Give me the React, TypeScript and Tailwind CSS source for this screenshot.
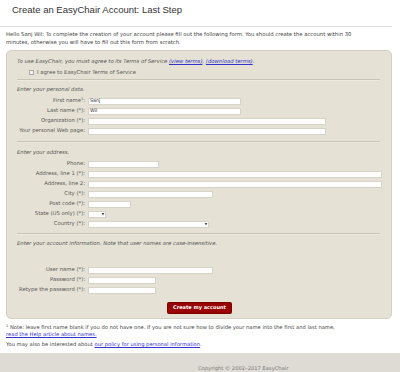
import React from 'react'

const font = { fontFamily: '"DejaVu Sans", Verdana, sans-serif' }

type Field = { label: React.ReactNode; w: string; value?: string; select?: boolean }

const personal: Field[] = [
  { label: <>First name<sup className="text-[3.5px]">1</sup>:</>, w: 'w-[153px]', value: 'Sanj' },
  { label: 'Last name (*):', w: 'w-[153px]', value: 'Wil' },
  { label: 'Organization (*):', w: 'w-[238px]' },
  { label: 'Your personal Web page:', w: 'w-[238px]' },
]

const address: Field[] = [
  { label: 'Phone:', w: 'w-[71px]' },
  { label: 'Address, line 1 (*):', w: 'w-[294px]' },
  { label: 'Address, line 2:', w: 'w-[294px]' },
  { label: 'City (*):', w: 'w-[125px]' },
  { label: 'Post code (*):', w: 'w-[43px]' },
  { label: 'State (US only) (*):', w: 'w-[18px]', select: true },
  { label: 'Country (*):', w: 'w-[121px]', select: true },
]

const account: Field[] = [
  { label: 'User name (*):', w: 'w-[125px]' },
  { label: 'Password (*):', w: 'w-[68px]' },
  { label: 'Retype the password (*):', w: 'w-[68px]' },
]

function Row({ f }: { f: Field }) {
  return (
    <div className="flex h-[10px] items-center">
      <div className="w-[71px] shrink-0 whitespace-nowrap pr-[3px] text-right text-[5.3px] text-[#555]">{f.label}</div>
      <div
        className={`${f.w} flex h-[7px] items-center justify-between border border-[#d6d3c8] bg-white px-[1px] text-[4.8px] text-[#333]`}
      >
        <span>{f.value}</span>
        {f.select && <span className="text-[3px] leading-none">▼</span>}
      </div>
    </div>
  )
}

function Sep() {
  return <div className="mr-[3px] h-[2px] border-t border-[#c8c4b6] bg-[#eceadf]" />
}

function Hint({ children }: { children: React.ReactNode }) {
  return <div className="flex h-[10px] items-center whitespace-nowrap text-[5.3px] italic text-[#555]">{children}</div>
}

export default function App() {
  return (
    <div className="relative h-[372px] w-[400px] overflow-hidden bg-white" style={font}>
      <div className="flex h-[20px] items-center pl-[12px] text-[9.5px] text-[#333]" style={{ fontFamily: '"Liberation Sans", Arial, sans-serif' }}>
        Create an EasyChair Account: Last Step
      </div>
      <div className="mt-[6px] mr-[8px] h-px bg-[#dcdcdc]" />
      <div className="w-[358px] px-[6px] pt-[3px] text-[5.3px] leading-[8px] text-[#444]">
        Hello Sanj Wil: To complete the creation of your account please fill out the following form. You should create the account within 30 minutes, otherwise you will have to fill out this form from scratch.
      </div>

      <div className="mx-[6px] mt-[4px] w-[386px] rounded-[5px] border border-[#d3cfc2] bg-[#e5e2d5] pl-[10px] pr-[8px] pt-[6px] pb-[5px]">
        <Hint>
          To use EasyChair, you must agree to its Terms of Service&nbsp;
          <span className="text-[#3333cc] underline">(view terms)</span>,&nbsp;
          <span className="text-[#3333cc] underline">(download terms)</span>.
        </Hint>
        <div className="flex h-[11px] items-center pl-[12px] text-[5.3px] text-[#555]">
          <span className="mr-[3px] inline-block h-[5px] w-[5px] border border-[#aaa] bg-[#f4f4f4]" />
          I agree to EasyChair Terms of Service
        </div>
        <div className="mt-[1px]"><Sep /></div>
        <div className="mt-[4px]"><Hint>Enter your personal data.</Hint></div>
        <div className="mt-[1px]">
          {personal.map((f, i) => <Row key={i} f={f} />)}
        </div>
        <div className="mt-[5px]"><Sep /></div>
        <div className="mt-[5px]"><Hint>Enter your address.</Hint></div>
        <div className="mt-[1px]">
          {address.map((f, i) => <Row key={i} f={f} />)}
        </div>
        <div className="mt-[4px]"><Sep /></div>
        <div className="mt-[4px]">
          <Hint>Enter your account information. Note that user names are case-insensitive.</Hint>
        </div>
        <div className="mt-[16px]">
          {account.map((f, i) => <Row key={i} f={f} />)}
        </div>
        <div className="mt-[8px] pl-[151px]">
          <div className="flex h-[10px] w-[63px] items-center justify-center rounded-[1px] bg-[#990000] text-[5px] font-bold text-white shadow-[0_0_0_1px_#7a0000]">
            Create my account
          </div>
        </div>
      </div>

      <div className="mt-[4px] px-[6px] text-[5.2px] leading-[8px] text-[#444]">
        <div className="whitespace-nowrap"><sup className="text-[3.5px]">1</sup> Note: leave first name blank if you do not have one. If you are not sure how to divide your name into the first and last name,</div>
        <div className="-mt-[1px] text-[#3333cc] underline">read the Help article about names.</div>
        <div className="mt-[2px]">
          You may also be interested about <span className="text-[#3333cc] underline">our policy for using personal information</span>.
        </div>
      </div>

      <div className="absolute left-0 right-0 top-[353px] h-[19px] bg-[#dedbd5]">
        <div className="pl-[198px] pt-[12px] text-[5.2px] text-[#777]">Copyright © 2002–2017 EasyChair</div>
      </div>
    </div>
  )
}
